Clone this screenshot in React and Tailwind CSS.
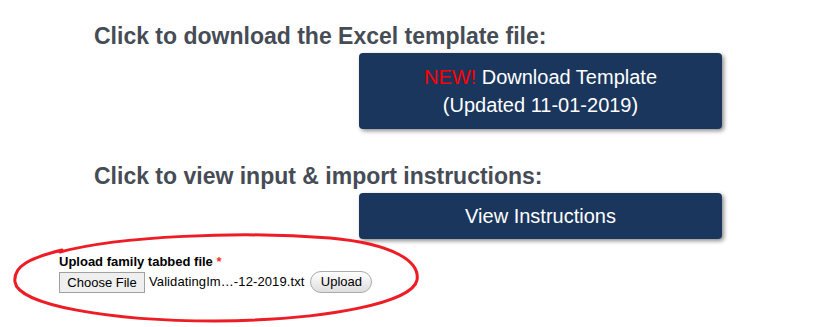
import React from "react";

const NavyButton = ({ children, className = "" }) => (
  <button
    className={`ml-[359px] flex w-[363px] flex-col items-center justify-center rounded-[4px] bg-[#1b365d] text-[20px] leading-[28px] text-white shadow-[2px_2px_4px_rgba(0,0,0,0.45)] ${className}`}
  >
    {children}
  </button>
);

const App = () => {
  return (
    <div
      className="relative h-[327px] w-full overflow-hidden bg-white"
      style={{ fontFamily: '"Liberation Sans", Arial, sans-serif' }}
    >
      <h2 className="pl-[94px] pt-[23px] text-[23px] font-bold leading-[26px] text-[#464c55]">
        Click to download the Excel template file:
      </h2>
      <NavyButton className="mt-[4px] h-[76px]">
        <span>
          <span className="text-[#ff0000]">NEW!</span> Download Template
        </span>
        <span>(Updated 11-01-2019)</span>
      </NavyButton>

      <h2 className="mt-[34px] pl-[94px] text-[23px] font-bold leading-[26px] text-[#464c55]">
        Click to view input &amp; import instructions:
      </h2>
      <NavyButton className="mt-[4px] h-[46px]">View Instructions</NavyButton>

      <div className="mt-[15px] pl-[59px] text-[13px] text-black">
        <div className="font-bold leading-[15px]">
          Upload family tabbed file <span className="text-[#e32]">*</span>
        </div>
        <div className="mt-[2px] flex items-center">
          <button className="h-[21px] w-[86px] border border-[#a0a0a0] bg-[#efefef] leading-[19px]">
            Choose File
          </button>
          <span className="ml-[4px] tracking-[0.1px]">ValidatingIm…-12-2019.txt</span>
          <button className="ml-[6px] h-[22px] w-[62px] rounded-full border border-[#aaaaaa] bg-gradient-to-b from-white to-[#dedede] leading-[20px]">
            Upload
          </button>
        </div>
      </div>

      <svg
        className="pointer-events-none absolute left-0 top-0"
        width="835"
        height="327"
        viewBox="0 0 835 327"
      >
        <path
          d="M60 252 C 120 236, 240 231, 330 238 C 395 244, 420 262, 417 280 C 413 302, 330 320, 215 321 C 110 321, 18 305, 15 282 C 13 266, 30 258, 62 250"
          fill="none"
          stroke="#ee1c24"
          strokeWidth="3"
          strokeLinecap="round"
        />
      </svg>
    </div>
  );
};

export default App;
